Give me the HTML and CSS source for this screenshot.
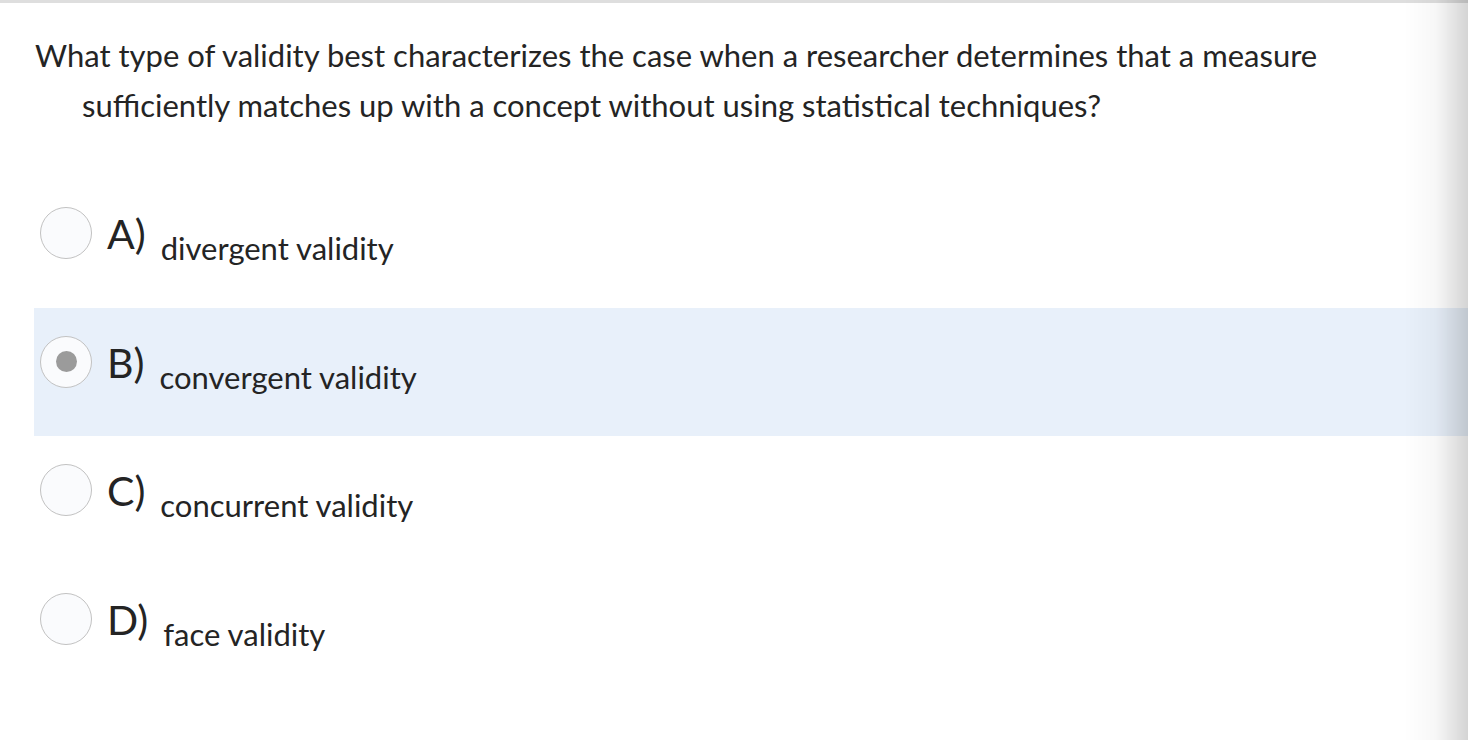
FILE: index.html
```html
<!DOCTYPE html>
<html lang="en">
<head>
<meta charset="utf-8">
<title>Question</title>
<link rel="stylesheet" href="styles.css">
</head>
<body>
<div class="topbar"></div>
<div class="page">
  <p class="question">What type of validity best characterizes the case when a researcher determines that a measure sufficiently matches up with a concept without using statistical techniques?</p>
  <div class="options">
    <div class="opt">
      <span class="radio"></span>
      <span class="letter">A)</span>
      <span class="text">divergent validity</span>
    </div>
    <div class="opt selected">
      <span class="radio"><span class="dot"></span></span>
      <span class="letter">B)</span>
      <span class="text">convergent validity</span>
    </div>
    <div class="opt">
      <span class="radio"></span>
      <span class="letter">C)</span>
      <span class="text">concurrent validity</span>
    </div>
    <div class="opt">
      <span class="radio"></span>
      <span class="letter">D)</span>
      <span class="text">face validity</span>
    </div>
  </div>
</div>
<div class="edge-shadow"></div>
</body>
</html>
```
FILE: styles.css
```css
html, body {
  margin: 0;
  padding: 0;
  background: #ffffff;
  height: 100%;
  overflow: hidden;
}
body {
  font-family: Lato, "Open Sans", sans-serif;
  color: #242424;
}
.topbar {
  height: 3px;
  background: #dedede;
}
.page {
  padding-left: 34px;
}
.question {
  margin: 27px 0 0 0;
  padding-left: 48px;
  text-indent: -47px;
  font-size: 31px;
  line-height: 50px;
  width: 1320px;
}
.options {
  margin-top: 49px;
}
.opt {
  height: 128.6px;
  display: flex;
  align-items: flex-start;
}
.opt.selected {
  background: #e8f0fa;
}
.radio {
  box-sizing: border-box;
  width: 52px;
  height: 52px;
  margin: 28px 0 0 6px;
  border: 1.5px solid #c2c2c2;
  border-radius: 50%;
  background: #fafbfd;
  display: flex;
  align-items: center;
  justify-content: center;
}
.dot {
  width: 21px;
  height: 21px;
  border-radius: 50%;
  background: #9b9b9b;
}
.letter {
  font-size: 41px;
  line-height: 41px;
  margin: 34px 0 0 15px;
}
.text {
  font-size: 31px;
  line-height: 31px;
  margin: 54px 0 0 15px;
}
.edge-shadow {
  position: fixed;
  top: 0;
  right: 0;
  width: 64px;
  height: 100%;
  background: linear-gradient(to right, rgba(0,0,0,0) 0%, rgba(0,0,0,0.03) 50%, rgba(0,0,0,0.17) 100%);
  pointer-events: none;
}
```
